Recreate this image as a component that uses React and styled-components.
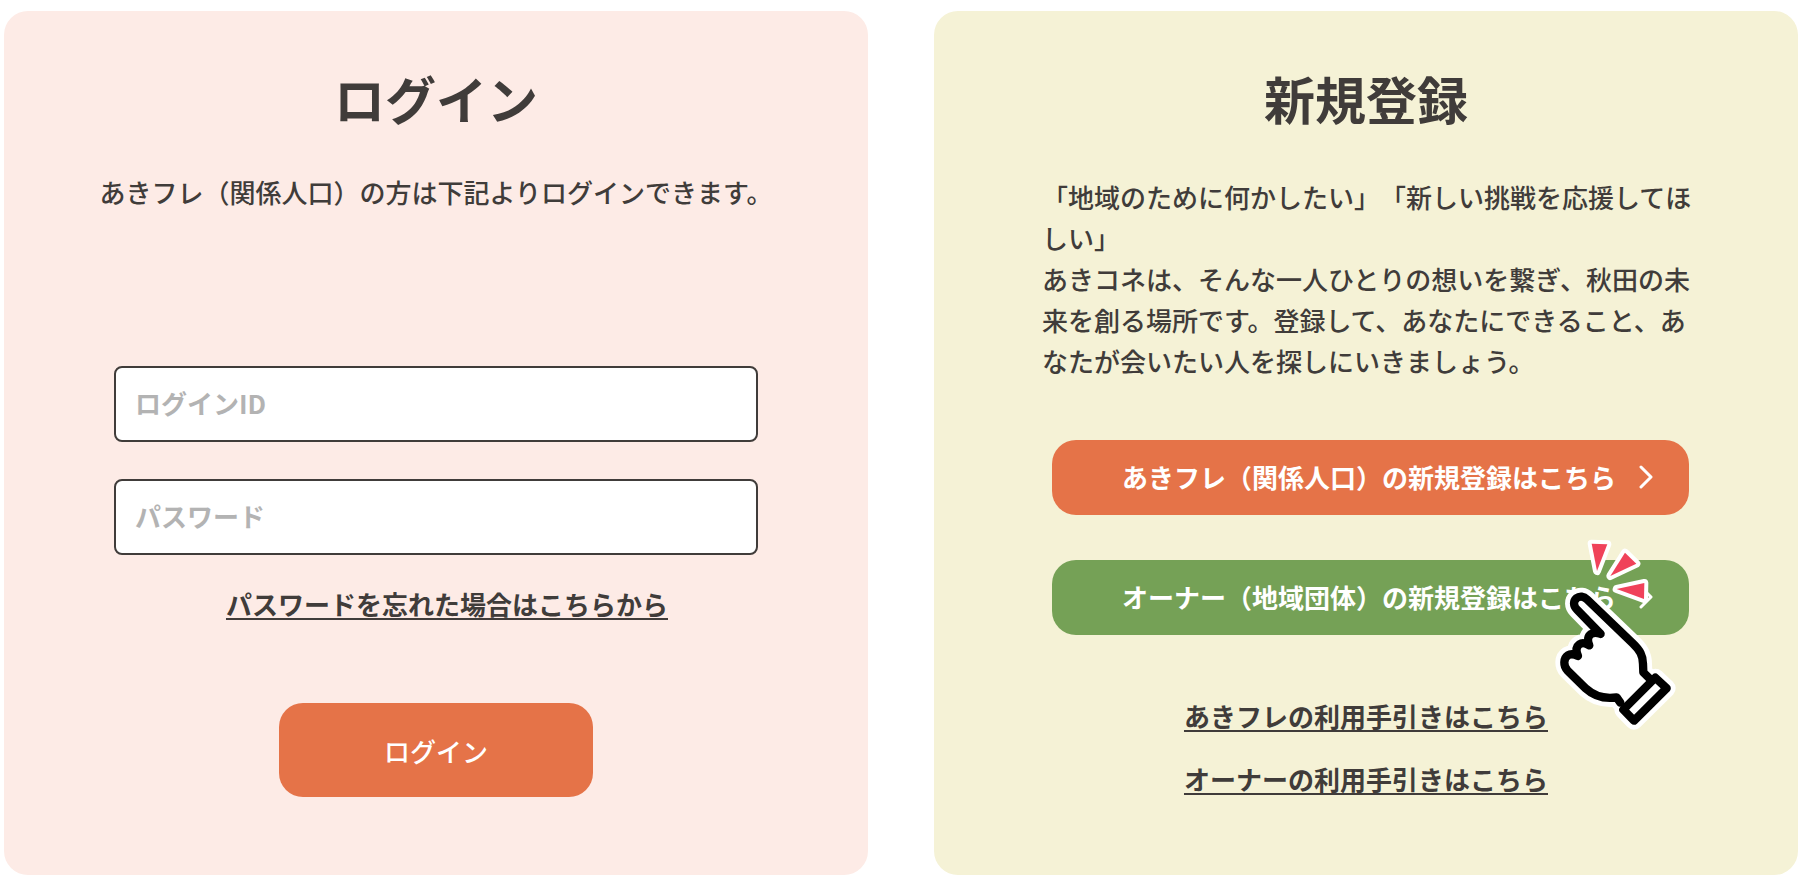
import React from "react"
import styled, { createGlobalStyle } from "styled-components"

const GlobalStyle = createGlobalStyle`
  *,
  *::before,
  *::after {
    box-sizing: border-box;
  }

  body {
    margin: 0;
    background: #fff;
    color: #403c3a;
    font-family: "Noto Sans CJK JP", "Noto Sans", sans-serif;
    font-size: 26px;
    font-weight: 500;
    line-height: 41px;
    text-spacing-trim: space-all;
  }
`

export default function App() {
  return (
    <>
      <GlobalStyle />
      <Page>
        <LoginPanel />
        <RegisterPanel />
      </Page>
    </>
  )
}

function LoginPanel() {
  return (
    <Panel $tone="#fdebe6" aria-labelledby="login-heading">
      <Heading id="login-heading">ログイン</Heading>
      <LoginLead>あきフレ（関係人口）の方は下記よりログインできます。</LoginLead>
      <LoginForm onSubmit={(e) => e.preventDefault()}>
        <Field type="text" name="loginId" aria-label="ログインID" placeholder="ログインID" />
        <Field type="password" name="password" aria-label="パスワード" placeholder="パスワード" />
        <ForgotRow>
          <TextLink href="#reset">パスワードを忘れた場合はこちらから</TextLink>
        </ForgotRow>
        <SubmitButton type="submit">ログイン</SubmitButton>
      </LoginForm>
    </Panel>
  )
}

function RegisterPanel() {
  return (
    <Panel $tone="#f5f2d6" aria-labelledby="register-heading">
      <Heading id="register-heading">新規登録</Heading>
      <RegisterLead>
        「地域のために何かしたい」「新しい挑戦を応援してほしい」
        <br />
        あきコネは、そんな一人ひとりの想いを繋ぎ、秋田の未来を創る場所です。登録して、あなたにできること、あなたが会いたい人を探しにいきましょう。
      </RegisterLead>
      <Actions>
        <ActionLink href="#register-akifure" $tone="#e57348">
          <span>あきフレ（関係人口）の新規登録はこちら</span>
          <Chevron />
        </ActionLink>
        <ActionLink href="#register-owner" $tone="#75a156">
          <span>オーナー（地域団体）の新規登録はこちら</span>
          <Chevron />
          <PointingHand />
        </ActionLink>
      </Actions>
      <Guides>
        <TextLink href="#guide-akifure">あきフレの利用手引きはこちら</TextLink>
        <TextLink href="#guide-owner">オーナーの利用手引きはこちら</TextLink>
      </Guides>
    </Panel>
  )
}

function Chevron() {
  return (
    <ChevronIcon viewBox="0 0 16 26" aria-hidden="true">
      <path
        d="M2 3 L12 13 L2 23"
        fill="none"
        stroke="#fff"
        strokeWidth="3"
        strokeLinecap="round"
        strokeLinejoin="round"
      />
    </ChevronIcon>
  )
}

const HAND =
  "M301 548 L290 532 C250 538 222 528 198 506 L143 452 C129 438 130 415 144 406 C153 400 164 403 174 408 C167 392 168 380 178 373 C188 366 198 370 208 376 C201 360 204 348 213 342 C221 337 232 338 242 342 L171 269 C159 257 160 243 169 235 C179 227 192 229 201 238 L338 370 C360 391 369 407 369 432 L370 457 L389 476"

const CUFF = "M406 473 L440 505 L342 602 L310 569 Z"

function PointingHand() {
  return (
    <HandIcon viewBox="0 0 570 660" aria-hidden="true">
      {/* white halo under everything */}
      <g fill="#fff" stroke="#fff" strokeWidth="54" strokeLinejoin="round" strokeLinecap="round">
        <path d={HAND} />
        <path d={CUFF} />
      </g>
      <g fill="#fff" stroke="#000" strokeWidth="25" strokeLinejoin="round" strokeLinecap="round">
        <path d={HAND} />
        <path d={CUFF} />
      </g>
      <g fill="#f0425a" stroke="#fff" strokeWidth="24" strokeLinejoin="round" paintOrder="stroke">
        <path d="M215 71 L262 73 L231 153 Z" />
        <path d="M315 98 L349 131 L271 168 Z" />
        <path d="M373 189 L372 237 L290 207 Z" />
      </g>
    </HandIcon>
  )
}

const Page = styled.main`
  display: grid;
  grid-template-columns: repeat(2, minmax(0, 1fr));
  gap: 66px;
  padding: 11px 4px 9px;
`

const Panel = styled.section`
  display: flex;
  flex-direction: column;
  padding: 51px 104px 76px;
  border-radius: 24px;
  background: ${(p) => p.$tone};
`

const Heading = styled.h1`
  margin: 0;
  font-size: 51px;
  font-weight: 700;
  line-height: 72px;
  text-align: center;
`

const LoginLead = styled.p`
  margin: 37px -20px 0;
  text-align: center;
`

const LoginForm = styled.form`
  display: flex;
  flex-direction: column;
  margin-top: 154px;
  padding: 0 6px;
`

const Field = styled.input`
  width: 100%;
  height: 76px;
  margin-bottom: 37px;
  padding: 0 19px 3px;
  border: 2px solid #403c3a;
  border-radius: 8px;
  background: #fff;
  color: inherit;
  font: inherit;
  font-weight: 700;

  &::placeholder {
    color: #b3b3b3;
    opacity: 1;
  }
`

const ForgotRow = styled.div`
  margin-top: -9px;
  padding-left: 22px;
  text-align: center;
`

const TextLink = styled.a`
  color: inherit;
  font-weight: 700;
  text-decoration: underline;
  text-decoration-thickness: 2px;
  text-underline-offset: 3px;
`

const SubmitButton = styled.button`
  align-self: center;
  width: 314px;
  height: 94px;
  margin-top: 79px;
  padding: 0;
  border: 0;
  border-radius: 24px;
  background: #e57348;
  color: #fff;
  font: inherit;
  cursor: pointer;
`

const RegisterLead = styled.p`
  margin: 42px -4px 0 4px;
`

const Actions = styled.div`
  display: flex;
  flex-direction: column;
  gap: 45px;
  margin-top: 59px;
  padding: 0 5px 0 14px;
`

const ActionLink = styled.a`
  position: relative;
  display: flex;
  align-items: center;
  justify-content: space-between;
  height: 75px;
  padding: 0 34px 2px 70px;
  border-radius: 24px;
  background: ${(p) => p.$tone};
  color: #fff;
  font-weight: 700;
  text-decoration: none;
  white-space: nowrap;
`

const ChevronIcon = styled.svg`
  flex: none;
  width: 16px;
  height: 26px;
`

const HandIcon = styled.svg`
  position: absolute;
  top: -40px;
  right: -21px;
  width: 190px;
  height: 220px;
  pointer-events: none;
`

const Guides = styled.nav`
  display: flex;
  flex-direction: column;
  align-items: center;
  gap: 22px;
  margin-top: 60px;
`
